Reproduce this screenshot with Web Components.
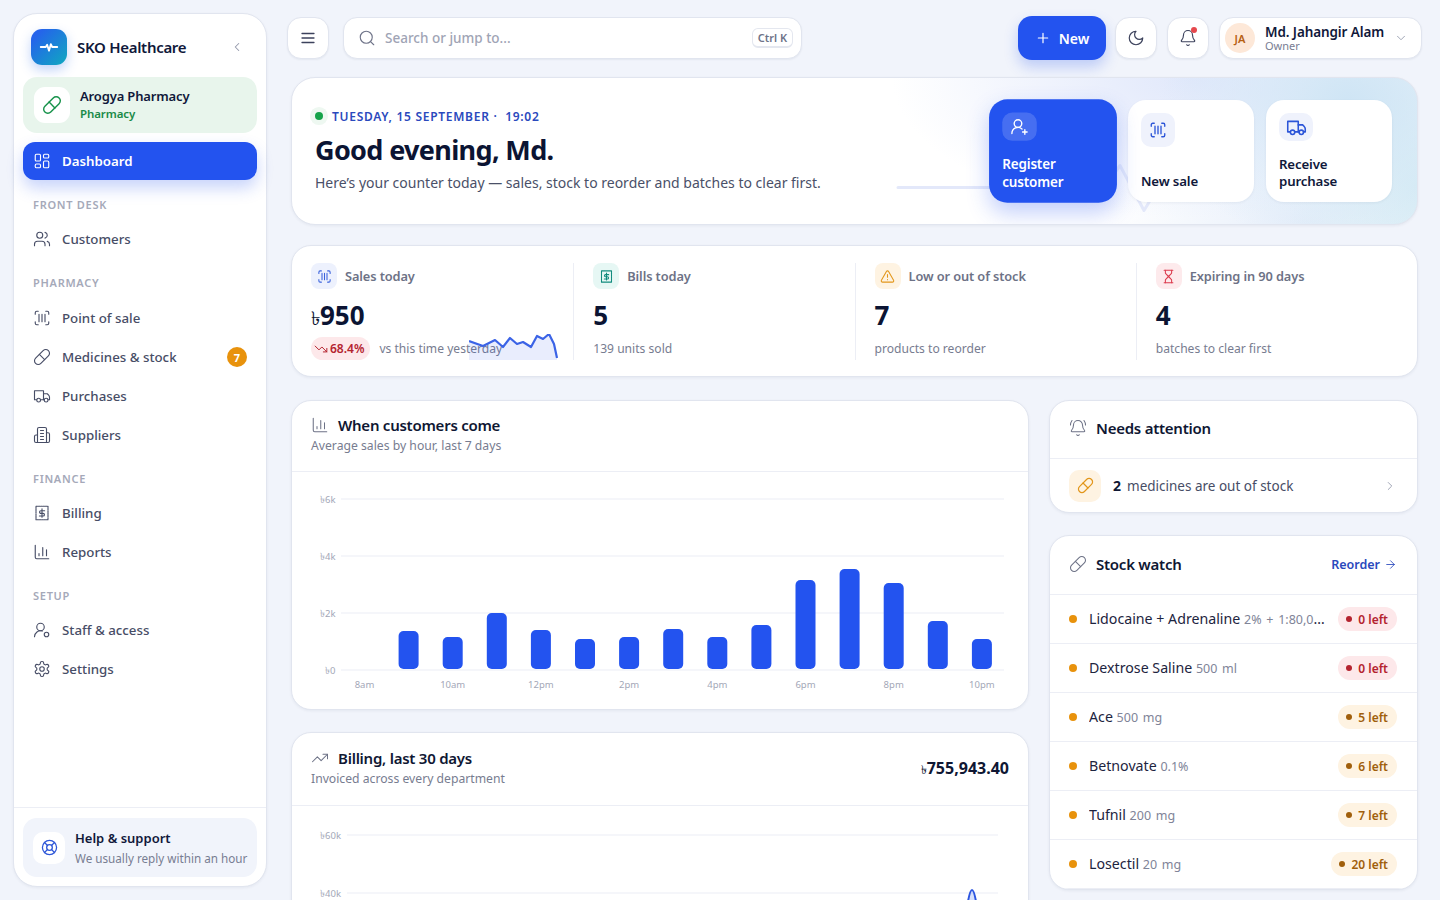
<!DOCTYPE html>
<html lang="en">
<head>
<meta charset="utf-8">
<title>SKO Healthcare</title>
<style>
  html, body { margin: 0; height: 100%; overflow: hidden; background: #f1f4fb; }
  body { font-family: "Noto Sans", sans-serif; color: #10183a; }
</style>
</head>
<body>
<app-shell>
  <side-nav slot="nav"></side-nav>
  <top-bar slot="top"></top-bar>
  <hero-panel slot="main"></hero-panel>
  <kpi-strip slot="main"></kpi-strip>
  <div slot="main" style="display:grid;grid-template-columns:738px 369px;gap:20px;margin-top:23px;align-items:start">
    <div style="display:flex;flex-direction:column;gap:22px">
      <card-panel icon="chart" heading="When customers come" sub="Average sales by hour, last 7 days" head-height="71"><bar-chart></bar-chart></card-panel>
      <card-panel icon="trend" heading="Billing, last 30 days" sub="Invoiced across every department" amount="755,943.40" head-height="73"><area-chart></area-chart></card-panel>
    </div>
    <div style="display:flex;flex-direction:column;gap:22px">
      <card-panel icon="ring" heading="Needs attention" head-height="58"><attention-row></attention-row></card-panel>
      <card-panel icon="pill" heading="Stock watch" link="Reorder" head-height="59">
        <stock-row name="Lidocaine + Adrenaline" meta="2% + 1:80,000" left="0" tone="red"></stock-row>
        <stock-row name="Dextrose Saline" meta="500 ml" left="0" tone="red"></stock-row>
        <stock-row name="Ace" meta="500 mg" left="5"></stock-row>
        <stock-row name="Betnovate" meta="0.1%" left="6"></stock-row>
        <stock-row name="Tufnil" meta="200 mg" left="7"></stock-row>
        <stock-row name="Losectil" meta="20 mg" left="20"></stock-row>
      </card-panel>
    </div>
  </div>
</app-shell>

<script>
(function() {
  const ICONS = {
    menu: '<path d="M4 6h16M4 12h16M4 18h16"/>',
    search: '<circle cx="11" cy="11" r="8"/><path d="m21 21-4.3-4.3"/>',
    plus: '<path d="M5 12h14M12 5v14"/>',
    left: '<path d="m15 18-6-6 6-6"/>',
    right: '<path d="m9 18 6-6-6-6"/>',
    down: '<path d="m6 9 6 6 6-6"/>',
    arrow: '<path d="M5 12h14M12 5l7 7-7 7"/>',
    pulse: '<path d="M3 12h5.500l1.500-2.500 2 6.500 2-7 1.500 3H21"/>',
    pill: '<path d="m10.5 20.5 10-10a4.95 4.95 0 1 0-7-7l-10 10a4.95 4.95 0 1 0 7 7Z"/><path d="m8.5 8.5 7 7"/>',
    grid: '<rect x="3" y="3" width="7" height="9" rx="1.5"/><rect x="14" y="3" width="7" height="5" rx="1.5"/><rect x="14" y="12" width="7" height="9" rx="1.5"/><rect x="3" y="16" width="7" height="5" rx="1.5"/>',
    users: '<path d="M16 21v-2a4 4 0 0 0-4-4H6a4 4 0 0 0-4 4v2"/><circle cx="9" cy="7" r="4"/><path d="M22 21v-2a4 4 0 0 0-3-3.87"/><path d="M16 3.13a4 4 0 0 1 0 7.75"/>',
    scan: '<path d="M3 7V5a2 2 0 0 1 2-2h2"/><path d="M17 3h2a2 2 0 0 1 2 2v2"/><path d="M21 17v2a2 2 0 0 1-2 2h-2"/><path d="M7 21H5a2 2 0 0 1-2-2v-2"/><path d="M8 7v10M12 7v10M16 7v10"/>',
    truck: '<path d="M10 17h4V5H2v12h3"/><path d="M20 17h2v-3.34a4 4 0 0 0-1.17-2.83L19 9h-5"/><path d="M14 17h1"/><circle cx="7.500" cy="17.500" r="2.500"/><circle cx="17.500" cy="17.500" r="2.500"/>',
    building: '<path d="M6 22V4a2 2 0 0 1 2-2h8a2 2 0 0 1 2 2v18Z"/><path d="M6 12H4a2 2 0 0 0-2 2v6a2 2 0 0 0 2 2h2"/><path d="M18 9h2a2 2 0 0 1 2 2v9a2 2 0 0 1-2 2h-2"/><path d="M10 6h4M10 10h4M10 14h4M10 18h4"/>',
    bill: '<path d="M4 3h16v18H4z" stroke-dasharray="2.2 .9"/><path d="M12 6.500v11"/><path d="M15.500 9h-5a1.750 1.750 0 0 0 0 3.500h3a1.750 1.750 0 0 1 0 3.500h-5"/>',
    chart: '<path d="M3 3v16a2 2 0 0 0 2 2h16"/><path d="M8 17v-3M13 17V6M18 17V9"/>',
    staff: '<path d="M2 21a8 8 0 0 1 10.400-7.600"/><circle cx="10" cy="8" r="5"/><circle cx="18" cy="18" r="3"/>',
    gear: '<path d="M12.22 2h-.44a2 2 0 0 0-2 2v.18a2 2 0 0 1-1 1.73l-.43.25a2 2 0 0 1-2 0l-.15-.08a2 2 0 0 0-2.73.73l-.22.38a2 2 0 0 0 .73 2.73l.15.1a2 2 0 0 1 1 1.72v.51a2 2 0 0 1-1 1.74l-.15.09a2 2 0 0 0-.73 2.73l.22.38a2 2 0 0 0 2.73.73l.15-.08a2 2 0 0 1 2 0l.43.25a2 2 0 0 1 1 1.73V20a2 2 0 0 0 2 2h.44a2 2 0 0 0 2-2v-.18a2 2 0 0 1 1-1.73l.43-.25a2 2 0 0 1 2 0l.15.08a2 2 0 0 0 2.73-.73l.22-.39a2 2 0 0 0-.73-2.73l-.15-.08a2 2 0 0 1-1-1.74v-.5a2 2 0 0 1 1-1.74l.15-.09a2 2 0 0 0 .73-2.73l-.22-.38a2 2 0 0 0-2.73-.73l-.15.08a2 2 0 0 1-2 0l-.43-.25a2 2 0 0 1-1-1.73V4a2 2 0 0 0-2-2z"/><circle cx="12" cy="12" r="3"/>',
    buoy: '<circle cx="12" cy="12" r="10"/><path d="m4.93 4.93 4.24 4.24M14.83 9.17l4.24-4.24M14.83 14.83l4.24 4.24M9.17 14.83l-4.24 4.24"/><circle cx="12" cy="12" r="4"/>',
    moon: '<path d="M12 3a6 6 0 0 0 9 9 9 9 0 1 1-9-9Z"/>',
    bell: '<path d="M10.268 21a2 2 0 0 0 3.464 0"/><path d="M3.262 15.326A1 1 0 0 0 4 17h16a1 1 0 0 0 .74-1.673C19.41 13.956 18 12.499 18 8A6 6 0 0 0 6 8c0 4.499-1.411 5.956-2.738 7.326"/>',
    ring: '<path d="M10.268 21a2 2 0 0 0 3.464 0"/><path d="M22 8c0-2.300-.8-4.300-2-6"/><path d="M3.262 15.326A1 1 0 0 0 4 17h16a1 1 0 0 0 .74-1.673C19.41 13.956 18 12.499 18 8A6 6 0 0 0 6 8c0 4.499-1.411 5.956-2.738 7.326"/><path d="M4 2C2.800 3.700 2 5.700 2 8"/>',
    alert: '<path d="m21.73 18-8-14a2 2 0 0 0-3.48 0l-8 14A2 2 0 0 0 4 21h16a2 2 0 0 0 1.73-3"/><path d="M12 9v4M12 17h.01"/>',
    hourglass: '<path d="M5 22h14M5 2h14"/><path d="M17 22v-4.172a2 2 0 0 0-.586-1.414L12 12l-4.414 4.414A2 2 0 0 0 7 17.828V22"/><path d="M7 2v4.172a2 2 0 0 0 .586 1.414L12 12l4.414-4.414A2 2 0 0 0 17 6.172V2"/>',
    trend: '<path d="M16 7h6v6"/><path d="m22 7-8.500 8.500-5-5L2 17"/>',
    fall: '<path d="M16 17h6v-6"/><path d="m22 17-8.500-8.500-5 5L2 7"/>',
    adduser: '<path d="M2 21a8 8 0 0 1 13.292-6"/><circle cx="10" cy="8" r="5"/><path d="M19 16v6M22 19h-6"/>'
  };

  function icon(name, size = 18, sw = 1.6) {
    return `<svg width="${size}" height="${size}" viewBox="0 0 24 24" fill="none" stroke="currentColor" stroke-width="${sw}" stroke-linecap="round" stroke-linejoin="round" style="display:block;flex:none">${ICONS[name]}</svg>`;
  }

  // the taka sign comes from a fallback font, keep it light and narrow like the rest
  const TAKA = '<span style="font-weight:400;font-size:.74em;letter-spacing:0">৳</span>';

  // small helper, every element just sets its shadow markup once
  class Base extends HTMLElement {
    connectedCallback() {
      if (!this.shadowRoot) {
        this.attachShadow({ mode: 'open' });
        this.shadowRoot.innerHTML = this.render();
      }
    }
    a(name, fallback = '') {
      return this.hasAttribute(name) ? this.getAttribute(name) : fallback;
    }
  }

  class AppShell extends Base {
    render() {
      return `
        <style>
          :host { display: flex; height: 100vh; overflow: hidden; }
          .nav { flex: none; width: 254px; padding: 13px 0; height: 100vh; box-sizing: border-box; margin-left: 13px; }
          .body { flex: 1; min-width: 0; padding: 16px 18px 0 20px; }
          .content { padding: 0 4px; margin-top: 17px; }
        </style>
        <div class="nav"><slot name="nav"></slot></div>
        <div class="body">
          <slot name="top"></slot>
          <div class="content"><slot name="main"></slot></div>
        </div>
      `;
    }
  }

  class SideNav extends Base {
    render() {
      return `
        <style>
          :host { display: flex; flex-direction: column; height: 100%; box-sizing: border-box; background: #fff; border: 1px solid #e1e5ef; border-radius: 24px; box-shadow: 0 1px 3px rgba(20,30,70,.06); }
          .brand { display: flex; align-items: center; height: 36px; margin: 15px 0 12px 17px; }
          .logo { width: 36px; height: 36px; border-radius: 11px; background: linear-gradient(135deg,#2563eb 15%,#0fa9c0 100%); color: #fff; display: flex; align-items: center; justify-content: center; box-shadow: 0 5px 12px rgba(37,99,235,.28); }
          .name { margin-left: 10px; font-size: 15px; font-weight: 600; letter-spacing: -.3px; color: #10183a; flex: 1; }
          .collapse { color: #9499ab; margin-right: 22px; }
          .org { margin: 0 9px; height: 56px; box-sizing: border-box; background: #e8f5ec; border-radius: 14px; display: flex; align-items: center; padding-left: 11px; gap: 10px; }
          .org i { width: 36px; height: 36px; border-radius: 11px; background: #fff; color: #16924a; display: flex; align-items: center; justify-content: center; }
          .org div { padding-bottom: 2px; }
          .org b { display: block; font-size: 13px; font-weight: 600; letter-spacing: -.15px; color: #10183a; line-height: 18px; }
          .org span { display: block; font-size: 11.500px; font-weight: 600; letter-spacing: -.1px; color: #198a48; line-height: 17px; }
          .items { flex: 1; margin: 9px 9px 0; }
          h4 { margin: 18px 0 8px 10px; height: 16px; line-height: 15px; font-size: 11px; font-weight: 600; letter-spacing: .72px; color: #a5a9b9; }
          h4.a { margin-top: 17px; }
          h4.b { margin-bottom: 9px; }
          .col { display: flex; flex-direction: column; gap: 3px; }
          .foot { border-top: 1px solid #eceef5; padding: 10px 9px 9px; }
          .help { height: 59px; border-radius: 14px; background: #f1f4fb; display: flex; align-items: center; gap: 10px; padding-left: 10px; }
          .help i { width: 32px; height: 32px; border-radius: 10px; background: #fff; color: #2d56d8; display: flex; align-items: center; justify-content: center; }
          .help div { padding-top: 2px; }
          .help b { display: block; font-size: 13px; font-weight: 600; color: #10183a; line-height: 19px; }
          .help span { display: block; font-size: 11.700px; color: #787d92; line-height: 21px; white-space: nowrap; }
        </style>
        <div class="brand">
          <div class="logo">${icon('pulse', 22, 2)}</div>
          <div class="name">SKO Healthcare</div>
          <div class="collapse">${icon('left', 14, 1.8)}</div>
        </div>
        <div class="org">
          <i>${icon('pill', 20, 1.7)}</i>
          <div><b>Arogya Pharmacy</b><span>Pharmacy</span></div>
        </div>
        <div class="items">
          <nav-item icon="grid" label="Dashboard" active></nav-item>
          <h4 class="a">FRONT DESK</h4>
          <div class="col"><nav-item icon="users" label="Customers"></nav-item></div>
          <h4 class="b">PHARMACY</h4>
          <div class="col">
            <nav-item icon="scan" label="Point of sale"></nav-item>
            <nav-item icon="pill" label="Medicines &amp; stock" count="7"></nav-item>
            <nav-item icon="truck" label="Purchases"></nav-item>
            <nav-item icon="building" label="Suppliers"></nav-item>
          </div>
          <h4>FINANCE</h4>
          <div class="col">
            <nav-item icon="bill" label="Billing"></nav-item>
            <nav-item icon="chart" label="Reports"></nav-item>
          </div>
          <h4>SETUP</h4>
          <div class="col">
            <nav-item icon="staff" label="Staff &amp; access"></nav-item>
            <nav-item icon="gear" label="Settings"></nav-item>
          </div>
        </div>
        <div class="foot">
          <div class="help">
            <i>${icon('buoy', 17, 1.8)}</i>
            <div><b>Help &amp; support</b><span>We usually reply within an hour</span></div>
          </div>
        </div>
      `;
    }
  }

  class NavItem extends Base {
    render() {
      const active = this.hasAttribute('active');
      const count = this.a('count');
      return `
        <style>
          :host { display: block; }
          .row { display: flex; align-items: center; height: 36px; padding: 0 10px; gap: 11px; border-radius: 12px; font-size: 13.300px; font-weight: 500; color: #474d66; }
          .row.on { height: 38px; background: #2353ef; color: #fff; font-weight: 600; box-shadow: 0 8px 16px rgba(35,83,239,.25); }
          .label { flex: 1; }
          .count { width: 20px; height: 20px; border-radius: 50%; background: #e8920c; color: #fff; font-size: 11px; font-weight: 700; display: flex; align-items: center; justify-content: center; }
        </style>
        <div class="row ${active ? 'on' : ''}">
          ${icon(this.a('icon'), 18, 1.5)}
          <span class="label">${this.a('label')}</span>
          ${count ? `<span class="count">${count}</span>` : ''}
        </div>
      `;
    }
  }

  class TopBar extends Base {
    render() {
      return `
        <style>
          :host { display: flex; align-items: center; height: 44px; gap: 10px; }
          .box { background: #fff; border: 1px solid #e1e5ef; border-radius: 14px; box-sizing: border-box; height: 42px; box-shadow: 0 1px 2px rgba(20,30,70,.06); display: flex; align-items: center; color: #3c425c; }
          .sq { width: 42px; justify-content: center; flex: none; }
          .search { width: 459px; margin-left: 4px; padding: 0 8px 0 14px; gap: 9px; flex: none; }
          .search svg { color: #6e7388; }
          .search span { flex: 1; font-size: 13.500px; font-weight: 500; color: #a0a4b5; }
          kbd { font-family: inherit; font-size: 11px; font-weight: 600; color: #6e7388; border: 1px solid #e4e7ef; border-bottom-width: 2px; border-radius: 6px; width: 41px; height: 20px; box-sizing: border-box; display: flex; align-items: center; justify-content: center; }
          .new { margin-left: auto; margin-right: -1px; width: 88px; height: 44px; border-radius: 14px; background: #2353ef; color: #fff; font-size: 14px; font-weight: 600; display: flex; align-items: center; justify-content: center; gap: 8px; box-shadow: 0 7px 14px rgba(35,83,239,.25); }
          .bell { position: relative; }
          .bell u { position: absolute; top: 9px; right: 11px; width: 6px; height: 6px; background: #e5484d; border-radius: 50%; }
          .user { width: 203px; flex: none; padding-left: 5px; }
          .av { width: 30px; height: 30px; border-radius: 50%; background: #fde8d8; color: #b65f12; font-size: 11px; font-weight: 600; display: flex; align-items: center; justify-content: center; }
          .who { margin-left: 10px; flex: 1; }
          .who b { display: block; font-size: 13.500px; font-weight: 600; letter-spacing: -.1px; color: #10183a; line-height: 16px; }
          .who span { display: block; font-size: 11px; color: #787d92; line-height: 12px; }
          .user svg { color: #9499ab; margin-right: 13px; }
        </style>
        <div class="box sq">${icon('menu', 18, 1.7)}</div>
        <div class="box search">${icon('search', 18, 1.5)}<span>Search or jump to...</span><kbd>Ctrl K</kbd></div>
        <div class="new">${icon('plus', 16, 1.8)}New</div>
        <div class="box sq">${icon('moon', 18, 1.6)}</div>
        <div class="box sq bell">${icon('bell', 18, 1.5)}<u></u></div>
        <div class="box user">
          <div class="av">JA</div>
          <div class="who"><b>Md. Jahangir Alam</b><span>Owner</span></div>
          ${icon('down', 14, 1.5)}
        </div>
      `;
    }
  }

  class HeroPanel extends Base {
    render() {
      return `
        <style>
          :host { display: flex; position: relative; overflow: hidden; height: 148px; box-sizing: border-box; border: 1px solid #e1e5ef; border-radius: 24px; box-shadow: 0 1px 3px rgba(20,30,70,.06);
            background: radial-gradient(190px 150px at 94% 16%, #cfe5f5 0%, rgba(210,230,245,0) 100%), radial-gradient(130px 190px at 100% 75%, #d9edf5 0%, rgba(217,237,245,0) 100%), radial-gradient(300px 140px at 80% 0%, #e1e8fb 0%, rgba(225,232,251,0) 100%), radial-gradient(200px 100px at 90% 100%, #e6eefa 0%, rgba(230,238,250,0) 100%), #fff; }
          .pulse { position: absolute; left: 0; top: 0; }
          .text { padding: 29px 0 0 23px; flex: 1; position: relative; }
          .eyebrow { display: flex; align-items: center; font-size: 12px; font-weight: 600; letter-spacing: .72px; color: #2a49bd; height: 18px; white-space: pre; }
          .dot { width: 8px; height: 8px; border-radius: 50%; background: #16a34a; box-shadow: 0 0 0 5px #eef8f1; margin-right: 9px; }
          h1 { margin: 7px 0 0; font-size: 27px; font-weight: 700; line-height: 36px; letter-spacing: -.65px; color: #0b1433; }
          p { margin: 5px 0 0; font-size: 14px; line-height: 20px; color: #4a5068; }
          .acts { position: relative; display: flex; gap: 12px; padding: 22px 25px 22px 0; }
        </style>
        <svg class="pulse" width="1125" height="146" fill="none" stroke="#e3e8fa" stroke-width="3" stroke-linejoin="round" stroke-linecap="round"><path d="M606 109.500H812l16-22 24 45 14-23h60"/></svg>
        <div class="text">
          <div class="eyebrow"><span class="dot"></span>TUESDAY, 15 SEPTEMBER ·  19:02</div>
          <h1>Good evening, Md.</h1>
          <p>Here’s your counter today — sales, stock to reorder and batches to clear first.</p>
        </div>
        <div class="acts">
          <quick-card icon="adduser" primary>Register<br>customer</quick-card>
          <quick-card icon="scan" tall>New sale</quick-card>
          <quick-card icon="truck" big>Receive<br>purchase</quick-card>
        </div>
      `;
    }
  }

  class QuickCard extends Base {
    render() {
      const primary = this.hasAttribute('primary');
      return `
        <style>
          :host { display: flex; flex-direction: column; width: 126px; box-sizing: border-box; padding: 13px 13px 12px; background: ${primary ? '#2353ef' : '#fff'}; border-radius: 18px; ${primary ? 'transform: scale(1.015); box-shadow: 0 10px 22px rgba(35,83,239,.28);' : 'box-shadow: 0 1px 3px rgba(20,30,70,.06);'} }
          i { width: 34px; height: ${this.hasAttribute('tall') ? 34 : 28}px; border-radius: 10px; background: ${primary ? 'rgba(255,255,255,.16)' : '#eff2fc'}; color: ${primary ? '#fff' : '#2d56d8'}; display: flex; align-items: center; justify-content: center; }
          span { margin-top: auto; font-size: 13.250px; font-weight: 600; letter-spacing: -.15px; line-height: 17px; color: ${primary ? '#fff' : '#10183a'}; }
        </style>
        <i>${icon(this.a('icon'), this.hasAttribute('big') ? 21 : 18, 1.8)}</i>
        <span><slot></slot></span>
      `;
    }
  }

  class KpiStrip extends Base {
    render() {
      return `
        <style>
          :host { display: grid; grid-template-columns: repeat(4, 1fr); height: 132px; box-sizing: border-box; margin-top: 20px; padding: 17px 0 18px; background: #fff; border: 1px solid #e1e5ef; border-radius: 20px; box-shadow: 0 1px 3px rgba(20,30,70,.06); }
        </style>
        <kpi-tile icon="scan" tone="blue" label="Sales today" value="950" money trend="68.4%" sub="vs this time yesterday"></kpi-tile>
        <kpi-tile icon="bill" tone="teal" label="Bills today" value="5" sub="139 units sold" line></kpi-tile>
        <kpi-tile icon="alert" tone="amber" label="Low or out of stock" value="7" sub="products to reorder" line></kpi-tile>
        <kpi-tile icon="hourglass" tone="rose" label="Expiring in 90 days" value="4" sub="batches to clear first" line></kpi-tile>
      `;
    }
  }

  const TONES = {
    blue: ['#edf1fd', '#3a62dc'],
    teal: ['#e6f7f4', '#0f8a7c'],
    amber: ['#fef3e2', '#e2961b'],
    rose: ['#fdeaec', '#dc3d4f']
  };

  class KpiTile extends Base {
    render() {
      const [bg, fg] = TONES[this.a('tone', 'blue')];
      const trend = this.a('trend');
      return `
        <style>
          :host { display: block; position: relative; padding-left: 19px; ${this.hasAttribute('line') ? 'border-left: 1px solid #eceef5;' : ''} }
          .head { display: flex; align-items: center; gap: 8px; font-size: 12.800px; font-weight: 600; letter-spacing: -.1px; color: #6d7286; height: 26px; }
          .head i { width: 26px; height: 26px; border-radius: 8px; background: ${bg}; color: ${fg}; display: flex; align-items: center; justify-content: center; }
          .val { margin-top: 8px; height: 36px; line-height: 36px; font-size: 26px; font-weight: 700; letter-spacing: 0; color: #0b1433; }
          .sub { margin-top: 4px; height: 23px; display: flex; align-items: center; gap: 9px; font-size: 12.100px; color: #777c90; }
          .sub em { font-style: normal; display: flex; align-items: center; gap: 2px; height: 23px; padding: 0 6px 0 3px; border-radius: 12px; background: #fde8ea; color: #b4232f; font-size: 12px; font-weight: 600; }
          svg.spark { position: absolute; left: 177px; top: 71px; }
        </style>
        <div class="head"><i>${icon(this.a('icon'), 15, 1.7)}</i>${this.a('label')}</div>
        <div class="val">${this.hasAttribute('money') ? TAKA : ''}${this.a('value')}</div>
        <div class="sub">${trend ? `<em>${icon('fall', 14, 1.7)}${trend}</em>` : ''}<span>${this.a('sub')}</span></div>
        ${trend ? `<svg class="spark" width="90" height="28" viewBox="0 0 90 28" fill="none">
          <path d="M0 7 14 12 26 6 34 13 41 4 48 10 54 8 62 13 68 2 74 5 80 0 85 10 88 24V26H0Z" fill="#2353ef" fill-opacity=".1"/>
          <path d="M0 7 14 12 26 6 34 13 41 4 48 10 54 8 62 13 68 2 74 5 80 0 85 10 88 24" stroke="#3b63e6" stroke-width="2.200" stroke-linejoin="round"/>
        </svg>` : ''}
      `;
    }
  }

  class CardPanel extends Base {
    render() {
      const sub = this.a('sub');
      const amount = this.a('amount');
      const link = this.a('link');
      return `
        <style>
          :host { display: block; background: #fff; border: 1px solid #e1e5ef; border-radius: 20px; box-shadow: 0 1px 3px rgba(20,30,70,.06); overflow: hidden; }
          header { height: ${this.a('head-height', 58)}px; box-sizing: border-box; display: flex; align-items: center; padding: 0 19px 0 19px; border-bottom: 1px solid #eceef5; }
          .txt { flex: 1; min-width: 0; margin-top: ${sub ? -2 : -3}px; }
          .ttl { display: flex; align-items: center; gap: 9px; font-size: 15px; font-weight: 600; letter-spacing: -.25px; color: #0f1733; line-height: 20px; }
          .ttl svg { color: #6d7286; }
          .sb { font-size: 12.200px; color: #777c90; line-height: 21px; }
          .amt { font-size: 16px; font-weight: 700; color: #0f1733; }
          .lnk { display: flex; align-items: center; gap: 4px; margin: -2px 1px 0 0; font-size: 12.500px; font-weight: 600; color: #2a49bd; }
        </style>
        <header>
          <div class="txt">
            <div class="ttl">${icon(this.a('icon'), 18, 1.4)}${this.a('heading')}</div>
            ${sub ? `<div class="sb">${sub}</div>` : ''}
          </div>
          ${amount ? `<div class="amt">${TAKA}${amount}</div>` : ''}
          ${link ? `<div class="lnk">${link}${icon('arrow', 13, 1.6)}</div>` : ''}
        </header>
        <slot></slot>
      `;
    }
  }

  class BarChart extends Base {
    render() {
      // coordinates are relative to the chart box, top of bars read off the shot
      const tops = [197, 159, 165, 141, 158, 167, 165, 157, 165, 153, 108, 97, 111, 149, 167];
      const names = { 0: '8am', 2: '10am', 4: '12pm', 6: '2pm', 8: '4pm', 10: '6pm', 12: '8pm', 14: '10pm' };
      const grid = [['৳6k', 27], ['৳4k', 84], ['৳2k', 141], ['৳0', 198]];
      let s = '';
      grid.forEach(([t, y]) => {
        s += `<line x1="49" x2="712" y1="${y}" y2="${y}" stroke="#f2f3f8" stroke-width="1.500"/>`;
        s += `<text x="43.500" y="${y + 3.500}" text-anchor="end">${t}</text>`;
      });
      tops.forEach((top, i) => {
        const cx = 72.5 + 44.1 * i;
        if (i > 0) s += `<rect x="${cx - 10}" y="${top}" width="20" height="${197 - top}" rx="5" fill="#2353ef"/>`;
        if (names[i]) s += `<text x="${cx}" y="215.500" text-anchor="middle">${names[i]}</text>`;
      });
      return `
        <style>
          :host { display: block; height: 237px; }
          text { font-size: 9.500px; fill: #a3a7b7; }
        </style>
        <svg width="736" height="237" style="display:block">${s}</svg>
      `;
    }
  }

  class AreaChart extends Base {
    render() {
      return `
        <style>
          :host { display: block; height: 300px; }
          text { font-size: 9.500px; fill: #a3a7b7; }
        </style>
        <svg width="736" height="300" style="display:block" fill="none">
          <line x1="55" x2="706" y1="29" y2="29" stroke="#f2f3f8" stroke-width="1.500"/>
          <line x1="55" x2="706" y1="87" y2="87" stroke="#f2f3f8" stroke-width="1.500"/>
          <text x="49" y="32.500" text-anchor="end">৳60k</text>
          <text x="49" y="90.500" text-anchor="end">৳40k</text>
          <path d="M660 210C668 190 673 84 680 84S692 190 700 210Z" fill="#2353ef" fill-opacity=".18"/>
          <path d="M660 210C668 190 673 84 680 84S692 190 700 210" stroke="#2d56e0" stroke-width="2"/>
        </svg>
      `;
    }
  }

  class AttentionRow extends Base {
    render() {
      return `
        <style>
          :host { display: flex; align-items: center; height: 53px; padding: 0 20px 0 19px; gap: 12px; font-size: 13.500px; color: #474d66; }
          i { width: 32px; height: 32px; border-radius: 10px; background: #fef3e2; color: #e2961b; display: flex; align-items: center; justify-content: center; }
          b { font-size: 14px; font-weight: 700; color: #0f1733; margin-right: 6px; }
          span { flex: 1; }
          .go { color: #9499ab; }
        </style>
        <i>${icon('pill', 17, 1.7)}</i>
        <span><b>2</b>medicines are out of stock</span>
        <div class="go">${icon('right', 14, 1.5)}</div>
      `;
    }
  }

  class StockRow extends Base {
    render() {
      const red = this.a('tone') === 'red';
      return `
        <style>
          :host { display: flex; align-items: center; height: 49px; box-sizing: border-box; padding: 0 20px 0 19px; border-bottom: 1px solid #eceef5; }
          .dot { flex: none; width: 8px; height: 8px; border-radius: 50%; background: #e8920c; margin-right: 12px; }
          .nm { flex: 1; min-width: 0; white-space: nowrap; overflow: hidden; text-overflow: ellipsis; font-size: 14.200px; line-height: 22px; color: #1d2440; margin-right: 13px; }
          .nm small { font-size: 12.500px; color: #808498; word-spacing: 1.500px; }
          .tag { flex: none; display: flex; align-items: center; gap: 6px; height: 24px; padding: 0 9px 0 8px; border-radius: 12px; font-size: 12px; font-weight: 600; background: ${red ? '#fde8ea' : '#fef3e2'}; color: ${red ? '#b4232f' : '#a05f0c'}; }
          .tag u { width: 6px; height: 6px; border-radius: 50%; background: currentColor; }
        </style>
        <span class="dot"></span>
        <span class="nm">${this.a('name')} <small>${this.a('meta')}</small></span>
        <span class="tag"><u></u>${this.a('left')} left</span>
      `;
    }
  }

  customElements.define('app-shell', AppShell);
  customElements.define('side-nav', SideNav);
  customElements.define('nav-item', NavItem);
  customElements.define('top-bar', TopBar);
  customElements.define('hero-panel', HeroPanel);
  customElements.define('quick-card', QuickCard);
  customElements.define('kpi-strip', KpiStrip);
  customElements.define('kpi-tile', KpiTile);
  customElements.define('card-panel', CardPanel);
  customElements.define('bar-chart', BarChart);
  customElements.define('area-chart', AreaChart);
  customElements.define('attention-row', AttentionRow);
  customElements.define('stock-row', StockRow);
})();
</script>
</body>
</html>
